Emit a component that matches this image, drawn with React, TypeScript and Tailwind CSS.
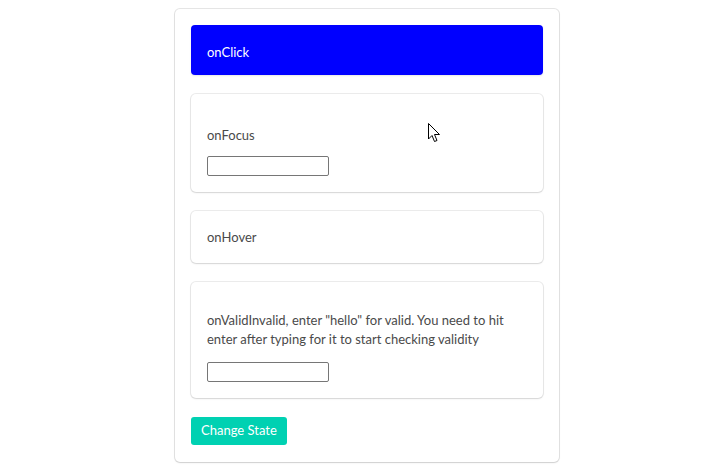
import React from "react";

const font = { fontFamily: 'Lato, "Open Sans", sans-serif' };

function Box({ children, className = "" }: { children: React.ReactNode; className?: string }) {
  return (
    <div
      className={`rounded-[5px] bg-white p-4 shadow-[0_1px_2px_rgba(10,10,10,0.1),0_0_0_1px_rgba(10,10,10,0.08)] ${className}`}
    >
      {children}
    </div>
  );
}

export default function App() {
  return (
    <div className="relative min-h-[472px] w-[706px] bg-white text-[13px] leading-[19.5px] text-[#4a4a4a]" style={font}>
      <div className="flex pl-[175px] pt-[9px]">
        <div className="flex w-[384px] flex-col gap-[19px] rounded-[5px] bg-white px-4 pt-4 pb-[17px] shadow-[0_1px_2px_rgba(10,10,10,0.1),0_0_0_1px_rgba(10,10,10,0.1)]">
          <div className="flex h-[50px] items-center rounded-[4px] bg-[#0000ff] px-4 pt-[5px] text-white shadow-[0_1px_2px_rgba(10,10,10,0.1)]">
            onClick
          </div>
          <Box className="pt-[32px]">
            <div>onFocus</div>
            <input className="mt-[10px] block h-[20px] w-[122px] rounded-[2px] border border-[#767676] bg-white" />
          </Box>
          <Box className="h-[52px] flex items-center pt-[18px]">
            <div>onHover</div>
          </Box>
          <Box className="pt-[29px]">
            <div>onValidInvalid, enter "hello" for valid. You need to hit enter after typing for it to start checking validity</div>
            <input className="mt-[12px] block h-[20px] w-[122px] rounded-[2px] border border-[#767676] bg-white" />
          </Box>
          <div>
            <button className="h-[28px] rounded-[3px] bg-[#00d1b2] px-[10px] pt-[1px] text-white">Change State</button>
          </div>
        </div>
      </div>
      <svg className="absolute left-[428px] top-[123px]" width="13" height="20" viewBox="0 0 13 20">
        <path d="M0.5 0.5 L0.5 16 L4 12.5 L6.5 18.5 L9 17.5 L6.5 11.5 L11.5 11.5 Z" fill="white" stroke="black" strokeWidth="1" strokeLinejoin="miter" />
      </svg>
    </div>
  );
}
